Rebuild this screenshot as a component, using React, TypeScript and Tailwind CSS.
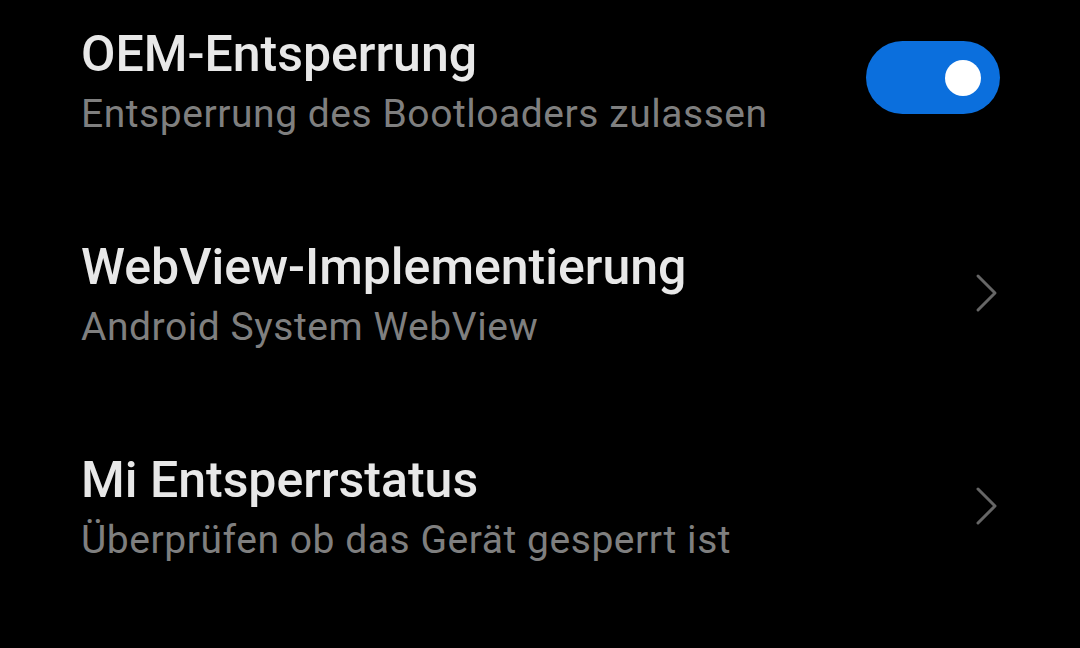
import React from "react";

function Chevron() {
  return (
    <svg width="24" height="40" viewBox="0 0 24 40" fill="none">
      <path d="M3 3 L20 20 L3 37" stroke="#666666" strokeWidth="3" strokeLinecap="round" strokeLinejoin="round" />
    </svg>
  );
}

function Row({ title, sub, right }: { title: string; sub: string; right: React.ReactNode }) {
  return (
    <div className="flex items-center justify-between pl-[81px] pr-[81px] h-[213px]">
      <div className="flex flex-col">
        <div className="text-[50px] leading-[60px] font-medium text-[#e8e8e8]">{title}</div>
        <div className="mt-[8px] text-[39px] leading-[44px] tracking-[0.55px] text-[#7f7f7f]">{sub}</div>
      </div>
      {right}
    </div>
  );
}

export default function App() {
  return (
    <div className="w-[1080px] h-[648px] bg-black overflow-hidden" style={{ fontFamily: "Roboto, 'Noto Sans', sans-serif" }}>
      <div className="-mt-[27px]">
        <Row
          title="OEM-Entsperrung"
          sub="Entsperrung des Bootloaders zulassen"
          right={
            <div className="w-[134px] h-[73px] -mt-[4px] -mr-[1px] rounded-full bg-[#0b6fdd] flex items-center justify-end pr-[19px]">
              <div className="w-[36px] h-[36px] rounded-full bg-white" />
            </div>
          }
        />
        <Row title="WebView-Implementierung" sub="Android System WebView" right={<Chevron />} />
        <Row title="Mi Entsperrstatus" sub="Überprüfen ob das Gerät gesperrt ist" right={<Chevron />} />
      </div>
    </div>
  );
}
